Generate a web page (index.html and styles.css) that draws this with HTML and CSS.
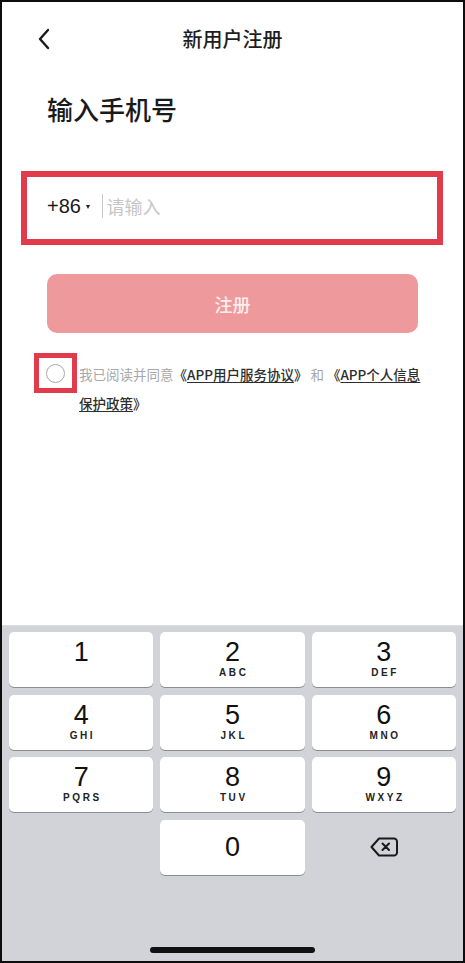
FILE: index.html
```html
<!DOCTYPE html>
<html lang="zh-CN">
<head>
<meta charset="utf-8">
<title>新用户注册</title>
<link rel="stylesheet" href="styles.css">
</head>
<body>
<div class="page">
  <div class="nav">
    <div class="nav-left">
      <svg class="back" width="14" height="22" viewBox="0 0 14 22"><polyline points="11,2 3,11 11,20" fill="none" stroke="#1a1a1a" stroke-width="2.4" stroke-linecap="round" stroke-linejoin="round"/></svg>
    </div>
    <div class="nav-title">新用户注册</div>
    <div></div>
  </div>

  <div class="heading">输入手机号</div>

  <div class="phone-box">
    <span class="code">+86</span>
    <span class="tri"></span>
    <span class="cursor"></span>
    <span class="placeholder">请输入</span>
  </div>

  <div class="btn">注册</div>

  <div class="agree">
    <div class="check-mark"><span class="circle"></span></div>
    <div class="agree-text"><span class="muted">我已阅读并同意</span><span class="link">《<u>APP用户服务协议</u>》</span> <span class="muted">和</span> <span class="link">《<u>APP个人信息</u><br><u>保护政策</u>》</span></div>
  </div>

  <div class="keyboard">
    <div class="keys">
      <div class="key"><span class="digit">1</span><span class="letters"></span></div>
      <div class="key"><span class="digit">2</span><span class="letters">ABC</span></div>
      <div class="key"><span class="digit">3</span><span class="letters">DEF</span></div>
      <div class="key"><span class="digit">4</span><span class="letters">GHI</span></div>
      <div class="key"><span class="digit">5</span><span class="letters">JKL</span></div>
      <div class="key"><span class="digit">6</span><span class="letters">MNO</span></div>
      <div class="key"><span class="digit">7</span><span class="letters">PQRS</span></div>
      <div class="key"><span class="digit">8</span><span class="letters">TUV</span></div>
      <div class="key"><span class="digit">9</span><span class="letters">WXYZ</span></div>
      <div class="blank"></div>
      <div class="key zero"><span class="digit">0</span></div>
      <div class="del">
        <svg width="30" height="22" viewBox="0 0 30 22"><path d="M10 2.5 H25 a3 3 0 0 1 3 3 V16.5 a3 3 0 0 1 -3 3 H10 L2.5 11 Z" fill="none" stroke="#1a1a1a" stroke-width="2" stroke-linejoin="round"/><path d="M13.5 7.5 L20 14 M20 7.5 L13.5 14" stroke="#1a1a1a" stroke-width="2" stroke-linecap="round"/></svg>
      </div>
    </div>
    <div class="home"></div>
  </div>
</div>
</body>
</html>
```

FILE: styles.css
```css
* { box-sizing: border-box; }
html, body { margin: 0; padding: 0; background: #fff; }
body { font-family: "Liberation Sans", "Noto Sans CJK SC", sans-serif; }

.page {
  width: 465px;
  height: 963px;
  border: 2px solid #0d0d0d;
  display: flex;
  flex-direction: column;
  background: #fff;
  overflow: hidden;
}

.nav {
  height: 76px;
  padding-bottom: 4px;
  display: grid;
  grid-template-columns: 1fr auto 1fr;
  align-items: center;
}
.nav-left { padding-left: 35px; display: flex; align-items: center; padding-top: 2px; }
.nav-title {
  font-family: "Noto Sans CJK SC", sans-serif;
  font-size: 20px;
  font-weight: 500;
  color: #1e1e1e;
}

.heading {
  margin-top: 14px;
  padding-left: 45px;
  font-family: "Noto Sans CJK SC", sans-serif;
  font-size: 26px;
  line-height: 34px;
  font-weight: 500;
  color: #1a1a1a;
}

.phone-box {
  margin-top: 45px;
  margin-left: 19px;
  width: 422px;
  height: 74px;
  border: 6px solid #e23b4b;
  display: flex;
  align-items: center;
  padding-left: 20px;
  padding-bottom: 4px;
}
.code { font-size: 20px; color: #1a1a1a; }
.tri {
  width: 0; height: 0;
  margin-left: 5px;
  margin-top: 1px;
  border-left: 2.5px solid transparent;
  border-right: 2.5px solid transparent;
  border-top: 4px solid #222;
}
.cursor {
  width: 1.5px;
  height: 24px;
  background: #c9c9c9;
  margin-left: 12px;
}
.placeholder {
  margin-left: 3px;
  font-family: "Noto Sans CJK SC", sans-serif;
  font-size: 18px;
  color: #c6c6c6;
}

.btn {
  margin-top: 29px;
  margin-left: 45px;
  width: 371px;
  height: 59px;
  border-radius: 10px;
  background: #ee9a9c;
  color: #fdeeee;
  font-family: "Noto Sans CJK SC", sans-serif;
  font-size: 18px;
  font-weight: 500;
  display: flex;
  align-items: center;
  justify-content: center;
}

.agree {
  margin-top: 20px;
  margin-left: 32px;
  display: flex;
  align-items: flex-start;
}
.check-mark {
  width: 43px;
  height: 40px;
  border: 5px solid #e23b4b;
  display: flex;
  align-items: center;
  justify-content: center;
  flex: none;
}
.circle {
  width: 19px;
  height: 19px;
  border-radius: 50%;
  border: 1.3px solid #a9a9a9;
}
.agree-text {
  margin-left: 2px;
  margin-top: 7px;
  font-family: "Noto Sans CJK SC", sans-serif;
  font-size: 13.5px;
  line-height: 29px;
  white-space: nowrap;
}
.muted { color: #a8a8a8; }
.link { color: #2e2e2e; font-weight: 500; }
.link u { text-underline-offset: 2px; }

.keyboard {
  margin-top: auto;
  height: 336px;
  background: #d1d3d8;
  border-top: 1px solid #dcdde1;
  display: flex;
  flex-direction: column;
  align-items: center;
}
.keys {
  width: 100%;
  padding: 6px 7px 0;
  display: grid;
  grid-template-columns: repeat(3, 1fr);
  grid-auto-rows: 55px;
  column-gap: 7px;
  row-gap: 7.5px;
}
.key {
  background: #fff;
  border-radius: 5px;
  box-shadow: 0 1px 0 #8d8e92;
  display: flex;
  flex-direction: column;
  align-items: center;
  padding-top: 7px;
}
.digit {
  font-size: 27px;
  line-height: 26px;
  color: #111;
}
.letters {
  margin-top: 3px;
  font-size: 10px;
  line-height: 10px;
  font-weight: bold;
  letter-spacing: 2.6px;
  padding-left: 2.6px;
  color: #222;
}
.key.zero { padding-top: 14px; }
.del {
  display: flex;
  align-items: center;
  justify-content: center;
}
.home {
  margin-top: 72px;
  width: 165px;
  height: 6px;
  border-radius: 3px;
  background: #111;
}
```
